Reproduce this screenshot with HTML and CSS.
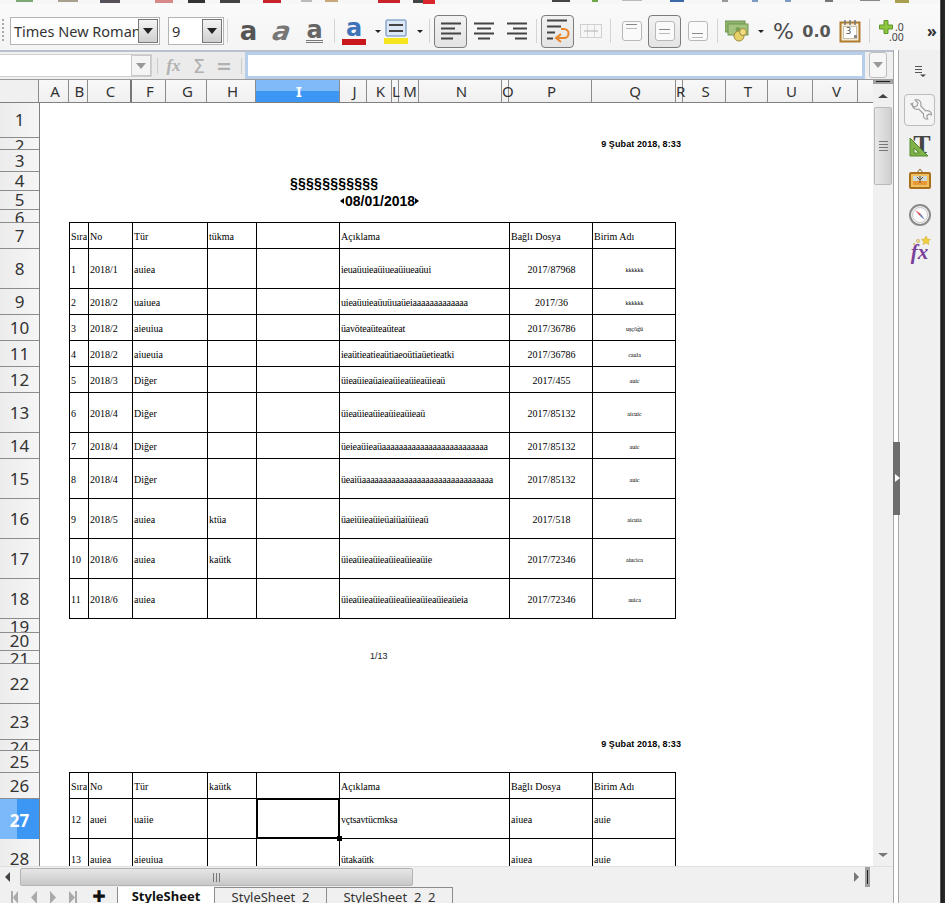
FILE: index.html
```html
<!DOCTYPE html>
<html lang="en">
<head>
  <meta charset="UTF-8" />
  <title>StyleSheet - Calc</title>
  <link rel="stylesheet" href="styles.css">
</head>
<body>
  <div class="window">
    <!-- what is left of the standard toolbar, cut off by the screenshot -->
    <svg class="top-strip" width="940" height="4" viewBox="0 0 940 4">
      <rect x="16" width="17" height="2" fill="#7fa876"/>
      <rect x="58" width="20" height="2" fill="#a8a08c"/>
      <rect x="100" width="20" height="3" fill="#55505a"/>
      <rect x="155" width="18" height="3" fill="#d88a8a"/>
      <rect x="188" width="17" height="3" fill="#333"/>
      <rect x="220" width="20" height="3" fill="#444"/>
      <rect x="263" width="18" height="3" fill="#c8222a"/>
      <rect x="301" width="11" height="2" fill="#bbb"/>
      <rect x="325" width="13" height="2" fill="#c8a878"/>
      <rect x="378" width="22" height="3" fill="#c8222a"/>
      <rect x="413" width="14" height="3" fill="#444"/>
      <rect x="423" width="12" height="4" fill="#d8262a"/>
      <rect x="552" width="18" height="2" fill="#444"/>
      <rect x="592" width="6" height="2" fill="#6fa84a"/>
      <rect x="622" width="20" height="1" fill="#bbb"/>
      <rect x="670" width="14" height="2" fill="#3c6aa8"/>
      <rect x="722" width="6" height="2" fill="#999"/>
      <rect x="752" width="6" height="2" fill="#7a9cc0"/>
      <rect x="785" width="6" height="2" fill="#7a9cc0"/>
      <rect x="825" width="8" height="2" fill="#777"/>
      <rect x="860" width="20" height="1" fill="#888"/>
      <rect x="895" width="14" height="3" fill="#a8a050"/>
    </svg>

    <div class="toolbar">
      <div class="grip"></div>
      <div class="combo combo-font">
        <span class="combo-text">Times New Roman</span>
        <span class="combo-btn"><i class="caret"></i></span>
      </div>
      <div class="combo combo-size">
        <span class="combo-text">9</span>
        <span class="combo-btn"><i class="caret"></i></span>
      </div>
      <div class="sep"></div>
      <div class="btn"><span class="glyph glyph-bold">a</span></div>
      <div class="btn"><span class="glyph glyph-italic">a</span></div>
      <div class="btn"><span class="glyph glyph-under">a</span></div>
      <div class="sep"></div>
      <div class="btn-sm">
        <span class="glyph glyph-color">a</span>
        <span class="bar bar-red"></span>
      </div>
      <i class="arrow"></i>
      <div class="btn-sm">
        <svg width="22" height="18" viewBox="0 0 22 18">
          <rect x="1" y="1" width="20" height="16" rx="1" fill="#dbe7f5" stroke="#5a84b8"/>
          <path d="M4 6h14M4 12h14" stroke="#444" stroke-width="2"/>
        </svg>
        <span class="bar bar-yellow"></span>
      </div>
      <i class="arrow"></i>
      <div class="sep"></div>
      <div class="btn active">
        <svg width="22" height="20" viewBox="0 0 22 20"><path d="M1 2.500h20M1 7.500h14M1 12.500h20M1 17.500h12" stroke="#444" stroke-width="2"/></svg>
      </div>
      <div class="btn">
        <svg width="22" height="20" viewBox="0 0 22 20"><path d="M1 2.500h20M4 7.500h14M1 12.500h20M5 17.500h12" stroke="#444" stroke-width="2"/></svg>
      </div>
      <div class="btn">
        <svg width="22" height="20" viewBox="0 0 22 20"><path d="M1 2.500h20M7 7.500h14M1 12.500h20M9 17.500h12" stroke="#444" stroke-width="2"/></svg>
      </div>
      <div class="sep"></div>
      <div class="btn active">
        <svg width="24" height="26" viewBox="0 0 24 26">
          <path d="M1 2.500h20M1 8.500h14M1 14.500h8M1 20.500h6" stroke="#444" stroke-width="2"/>
          <path d="M15 11h3a4.500 4.500 0 0 1 0 9h-6" fill="none" stroke="#e8862a" stroke-width="2"/>
          <path d="M15 16l-5 4 5 4" fill="none" stroke="#e8862a" stroke-width="2"/>
        </svg>
      </div>
      <div class="btn">
        <svg width="22" height="14" viewBox="0 0 22 14">
          <rect x=".5" y=".5" width="21" height="13" fill="#f6f6f6" stroke="#d0d0d0"/>
          <path d="M7.500 1v12M14.500 1v12" stroke="#d8d8d8"/>
          <path d="M4 7h14" stroke="#b0b0b0"/>
        </svg>
      </div>
      <div class="sep"></div>
      <div class="btn"><span class="cell-ico"><i class="mark-top"></i></span></div>
      <div class="btn active"><span class="cell-ico"><i class="mark-mid"></i></span></div>
      <div class="btn"><span class="cell-ico"><i class="mark-bot"></i></span></div>
      <div class="sep"></div>
      <div class="btn-sm">
        <svg width="24" height="22" viewBox="0 0 24 22">
          <rect x="0" y="1" width="20" height="11" fill="#8fb36a" stroke="#6f9650"/>
          <rect x="3" y="4" width="20" height="11" fill="#a4c47e" stroke="#6f9650"/>
          <circle cx="13" cy="9.500" r="2.500" fill="#7aa058"/>
          <circle cx="14" cy="16" r="5" fill="#e8d068" stroke="#9a8a3a"/>
          <circle cx="18" cy="12" r="3.500" fill="#efdc80" stroke="#9a8a3a"/>
        </svg>
      </div>
      <i class="arrow"></i>
      <div class="btn"><span class="txt-percent">%</span></div>
      <div class="btn"><span class="txt-num">0.0</span></div>
      <div class="btn">
        <svg width="22" height="24" viewBox="0 0 22 24">
          <rect x="1.500" y="3.500" width="19" height="19" fill="#f4ecd8" stroke="#b07c2e" stroke-width="2"/>
          <rect x="4.500" y="7.500" width="13" height="12" fill="#fff" stroke="#c8c0a8"/>
          <path d="M6 1v5M11 1v5M16 1v5" stroke="#777" stroke-width="1.500"/>
          <rect x="15" y="16" width="3" height="3" fill="#888"/>
        </svg>
        <span class="cal-day">3</span>
      </div>
      <div class="sep"></div>
      <div class="btn add-dec">
        <svg class="add-plus" width="14" height="14" viewBox="0 0 14 14"><path d="M5 .5h4v4.500h4.500v4H9v4.500H5V9H.5V5H5z" fill="#8cc63e" stroke="#5f9428"/></svg>
        <span class="add-dec-txt"><span>.0</span><span>.00</span></span>
      </div>
      <span class="more">»</span>
    </div>

    <div class="work">
      <div class="calc">
        <div class="formula">
          <div class="namebox">
            <span class="combo-btn flat"><i class="caret grey"></i></span>
          </div>
          <div class="fx-group">
            <span class="fx-sep"></span>
            <span class="fx-btn fx-italic">fx</span>
            <span class="fx-btn fx-sigma">Σ</span>
            <span class="fx-btn fx-equal">=</span>
            <span class="fx-sep"></span>
          </div>
          <div class="formula-input"></div>
          <div class="formula-drop"><i class="caret grey"></i></div>
        </div>

        <div class="sheet-area">
          <div class="sheet-main">
            <div class="colheads">
              <div class="corner"></div>
              <div>A</div><div>B</div><div class="hidden-after">C</div><div>F</div><div>G</div><div>H</div>
              <div class="sel">I</div>
              <div>J</div><div>K</div><div class="narrow">L</div><div>M</div><div>N</div><div class="narrow">O</div><div>P</div><div>Q</div>
              <div class="narrow">R</div><div>S</div><div>T</div><div>U</div><div>V</div><div></div>
            </div>

            <div class="sheet-body">
              <div class="rowheads">
                <div>1</div><div class="tight">2</div><div>3</div><div>4</div><div>5</div><div class="tight">6</div>
                <div>7</div><div>8</div><div>9</div><div>10</div><div>11</div><div>12</div><div>13</div><div>14</div>
                <div>15</div><div>16</div><div>17</div><div>18</div><div class="tight">19</div><div class="tight">20</div>
                <div class="tight">21</div><div>22</div><div>23</div><div class="tight">24</div><div>25</div><div>26</div>
                <div class="sel">27</div><div>28</div>
              </div>

              <div class="page">
                <div class="stamp first">9 Şubat 2018, 8:33</div>
                <div class="doc-title">§§§§§§§§§§§</div>
                <div class="doc-date"><i class="tri-l"></i>08/01/2018<i class="tri-r"></i></div>

                <table class="report first-table">
                  <colgroup>
                    <col class="c1"><col class="c2"><col class="c3"><col class="c4"><col class="c5"><col class="c6"><col class="c7"><col class="c8">
                  </colgroup>
                  <tr class="r26"><td>Sıra</td><td>No</td><td>Tür</td><td>tükma</td><td></td><td>Açıklama</td><td>Bağlı Dosya</td><td>Birim Adı</td></tr>
                  <tr class="r40"><td>1</td><td>2018/1</td><td>auiea</td><td></td><td></td><td class="desc">ieuaüuieaüiueaüiueaüui</td><td class="file">2017/87968</td><td class="unit">kkkkkk</td></tr>
                  <tr class="r26"><td>2</td><td>2018/2</td><td>uaiuea</td><td></td><td></td><td class="desc">uieaüuieaüuüuaüeiaaaaaaaaaaaaa</td><td class="file">2017/36</td><td class="unit">kkkkkk</td></tr>
                  <tr class="r26"><td>3</td><td>2018/2</td><td>aieuiua</td><td></td><td></td><td class="desc">üavöteaüteaüteat</td><td class="file">2017/36786</td><td class="unit">uşçöğü</td></tr>
                  <tr class="r26"><td>4</td><td>2018/2</td><td>aiueuia</td><td></td><td></td><td class="desc">ieaütieatieaütiaeoütiaüetieatki</td><td class="file">2017/36786</td><td class="unit">caula</td></tr>
                  <tr class="r26"><td>5</td><td>2018/3</td><td>Diğer</td><td></td><td></td><td class="desc">üieaüieaüaieaüieaüieaüieaü</td><td class="file">2017/455</td><td class="unit">auic</td></tr>
                  <tr class="r40"><td>6</td><td>2018/4</td><td>Diğer</td><td></td><td></td><td class="desc">üieaüieaüieaüieaüieaü</td><td class="file">2017/85132</td><td class="unit">aicuic</td></tr>
                  <tr class="r26"><td>7</td><td>2018/4</td><td>Diğer</td><td></td><td></td><td class="desc">üeieaüieaüaaaaaaaaaaaaaaaaaaaaaaaaa</td><td class="file">2017/85132</td><td class="unit">auic</td></tr>
                  <tr class="r40"><td>8</td><td>2018/4</td><td>Diğer</td><td></td><td></td><td class="desc">üeaiüaaaaaaaaaaaaaaaaaaaaaaaaaaaaaaa</td><td class="file">2017/85132</td><td class="unit">auic</td></tr>
                  <tr class="r40"><td>9</td><td>2018/5</td><td>auiea</td><td>ktüa</td><td></td><td class="desc">üaeiüieaüieüaiüaiüieaü</td><td class="file">2017/518</td><td class="unit">aicuia</td></tr>
                  <tr class="r40"><td>10</td><td>2018/6</td><td>auiea</td><td>kaütk</td><td></td><td class="desc">üieaüieaüieaüieaüieaüie</td><td class="file">2017/72346</td><td class="unit">aiucica</td></tr>
                  <tr class="r40"><td>11</td><td>2018/6</td><td>auiea</td><td></td><td></td><td class="desc">üieaüieaüieaüieaüieaüieaüieaüeia</td><td class="file">2017/72346</td><td class="unit">auica</td></tr>
                </table>

                <div class="page-no">1/13</div>
                <div class="stamp second">9 Şubat 2018, 8:33</div>

                <table class="report second-table">
                  <colgroup>
                    <col class="c1"><col class="c2"><col class="c3"><col class="c4"><col class="c5"><col class="c6"><col class="c7"><col class="c8">
                  </colgroup>
                  <tr class="r26"><td>Sıra</td><td>No</td><td>Tür</td><td>kaütk</td><td></td><td>Açıklama</td><td>Bağlı Dosya</td><td>Birim Adı</td></tr>
                  <tr class="r40"><td>12</td><td>auei</td><td>uaiie</td><td></td><td class="current"><span class="cursor"></span><span class="cursor-dot"></span></td><td class="desc">vçtsavtücmksa</td><td>aiuea</td><td>auie</td></tr>
                  <tr class="r40"><td>13</td><td>auiea</td><td>aieuiua</td><td></td><td></td><td class="desc">ütakaütk</td><td>aiuea</td><td>auie</td></tr>
                </table>
              </div>
            </div>
          </div>

          <div class="vscroll">
            <div class="split-h"></div>
            <i class="tri-up"></i>
            <div class="vthumb"><span></span><span></span><span></span><span></span></div>
            <i class="tri-down"></i>
          </div>
        </div>

        <div class="hscroll">
          <i class="tri-left"></i>
          <div class="hthumb"><span></span><span></span><span></span></div>
          <i class="tri-right"></i>
          <div class="split-v"></div>
        </div>

        <div class="tabbar">
          <div class="tab-nav">
            <svg width="90" height="16" viewBox="0 0 90 16">
              <path d="M11 3h2v13h-2zM18 3l-5 6.500 5 6.500z" fill="#aaa"/>
              <path d="M37 3l-6 6.500 6 6.500z" fill="#aaa"/>
              <path d="M50 3l6 6.500-6 6.500z" fill="#aaa"/>
              <path d="M69 3l6 6.500-6 6.500zM75 3h2v13h-2z" fill="#aaa"/>
            </svg>
          </div>
          <span class="tab-add">✚</span>
          <div class="tab tab-on">StyleSheet</div>
          <div class="tab tab-2">StyleSheet&nbsp; 2</div>
          <div class="tab tab-3">StyleSheet&nbsp; 2&nbsp; 2</div>
        </div>
      </div>

      <div class="deck-split">
        <div class="deck-handle"></div>
      </div>

      <div class="sidebar">
        <svg class="deck-menu" width="12" height="12" viewBox="0 0 12 12"><path d="M1 1.500h7M1 4.500h7M1 7.500h7" stroke="#555"/><path d="M6 9.500h6l-3 2.500z" fill="#444"/></svg>
        <div class="deck-btn on">
          <svg width="24" height="24" viewBox="0 0 24 24"><path d="M3 6l3 3 3-1 1-3-3-3c3-1 6 1 6 4 0 1 0 1.500-.3 2l5 5c3-1 6 1 6 4l-3-1-2 2 1 3c-3 .5-5-2-4-5l-5-5c-.5.300-1 .3-2 .3-3 0-5-3-4-6z" fill="#f8f8f8" stroke="#a0a0a0" stroke-width="1.200"/></svg>
        </div>
        <div class="deck-btn">
          <span class="deck-t">T</span>
          <svg class="deck-tri" width="20" height="20" viewBox="0 0 20 20"><path d="M1 1v18h18z" fill="#7fb04a" stroke="#4f8a2a"/><path d="M5 11v5h5z" fill="#e8f2d8" stroke="#4f8a2a"/></svg>
        </div>
        <div class="deck-btn">
          <svg width="24" height="24" viewBox="0 0 24 24">
            <path d="M12 1l-3 4h6z" fill="none" stroke="#8a6a2a"/>
            <rect x="2" y="5" width="20" height="15" rx="1" fill="#f0c060" stroke="#a8701c" stroke-width="2"/>
            <rect x="5" y="8" width="14" height="5" fill="#cfd8d8"/>
            <rect x="5" y="13" width="14" height="4" fill="#e89838"/>
            <path d="M12 8v7M9 9l3 3 3-3" stroke="#6a4a20" fill="none"/>
          </svg>
        </div>
        <div class="deck-btn">
          <svg width="24" height="24" viewBox="0 0 24 24">
            <circle cx="12" cy="12" r="10" fill="#f4f4f4" stroke="#8a8a8a" stroke-width="2"/>
            <circle cx="12" cy="12" r="7.500" fill="#fbfbfb" stroke="#c8c8c8"/>
            <path d="M7 7l6 4-1 2z" fill="#d84a4a"/>
            <path d="M17 17l-5-4 1-2z" fill="#5a7ab8"/>
          </svg>
        </div>
        <div class="deck-btn deck-fx">
          <span class="deck-fx-txt">fx</span>
          <svg class="deck-stars" width="20" height="10" viewBox="0 0 20 10"><path d="M14 0l1.500 3 3 .5-2.200 2 .6 3-2.900-1.500-2.900 1.500.6-3-2.200-2 3-.5z" fill="#f0d040" stroke="#c8a820" stroke-width=".5"/><circle cx="6" cy="5" r="1.800" fill="#e8d898" stroke="#b8a050" stroke-width=".5"/><circle cx="2" cy="8" r="1" fill="#c8b060"/></svg>
        </div>
      </div>
    </div>
  </div>
  <div class="edge"></div>
</body>
</html>
```

FILE: styles.css
```css
html, body {
  margin: 0;
  padding: 0;
  height: 903px;
  overflow: hidden;
}
body {
  display: flex;
  font-family: 'Noto Sans', sans-serif;
  color: #333;
  background: #f0f0f0;
}
.window {
  width: 940px;
  height: 903px;
  display: flex;
  flex-direction: column;
  flex: none;
}
.edge {
  width: 5px;
  background: linear-gradient(to right, #777, #1e1e1e 30%, #2a2a2a);
}
.top-strip {
  display: block;
  flex: none;
  background: #f7f7f7;
}

/* Formatting toolbar */
.toolbar {
  height: 46px;
  box-sizing: border-box;
  padding: 8px 0 0 2px;
  display: flex;
  align-items: center;
  flex: none;
  background: linear-gradient(to bottom, #fafafa, #f4f4f4);
}
.grip {
  width: 2px;
  height: 24px;
  background: repeating-linear-gradient(to bottom, #aaa 0 2px, transparent 2px 4px);
}
.combo {
  height: 28px;
  box-sizing: border-box;
  border: 1px solid #b4b4b4;
  background: #fff;
  display: flex;
  align-items: center;
  margin-left: 6px;
  flex: none;
  position: relative;
}
.combo-font {
  width: 150px;
}
.combo-size {
  width: 56px;
  margin-left: 8px;
}
.combo-text {
  font-size: 14.5px;
  padding-left: 3px;
  white-space: nowrap;
  color: #333;
  overflow: hidden;
  flex: 1;
}
.combo-btn {
  width: 20px;
  height: 24px;
  margin-right: 1px;
  box-sizing: border-box;
  border: 1px solid #777;
  background: linear-gradient(to bottom, #f4f4f4, #cfcfcf);
  display: flex;
  align-items: center;
  justify-content: center;
  flex: none;
}
.caret {
  display: block;
  width: 0;
  height: 0;
  border-left: 5px solid transparent;
  border-right: 5px solid transparent;
  border-top: 6px solid #222;
}
.caret.grey {
  border-top-color: #999;
}
.sep {
  width: 1px;
  height: 24px;
  margin: 0 4px 0 3px;
  background: #d4d4d4;
  flex: none;
}
.btn {
  width: 33px;
  height: 33px;
  box-sizing: border-box;
  display: flex;
  align-items: center;
  justify-content: center;
  flex: none;
  position: relative;
}
.btn.active {
  border: 1px solid #7c7c7c;
  border-radius: 4px;
  background: linear-gradient(to bottom, #f2f2f2, #e4e4e4);
}
.btn-sm {
  width: 24px;
  height: 33px;
  margin-left: 3px;
  display: flex;
  flex-direction: column;
  align-items: center;
  justify-content: center;
  flex: none;
}
.arrow {
  width: 0;
  height: 0;
  margin-left: 9px;
  margin-right: 3px;
  border-left: 3px solid transparent;
  border-right: 3px solid transparent;
  border-top: 3px solid #222;
  flex: none;
}
.arrow + .btn-sm {
  margin-left: 0;
}
.glyph {
  font-family: 'DejaVu Sans', sans-serif;
  font-size: 26px;
  line-height: 24px;
  color: #555;
}
.glyph-bold {
  font-weight: 700;
}
.glyph-italic {
  display: inline-block;
  font-style: italic;
  font-weight: 700;
  color: #777;
  transform: skewX(-10deg);
}
.glyph-under {
  color: #666;
  border-bottom: 3px double #777;
  line-height: 20px;
  font-size: 24px;
  font-weight: 700;
}
.glyph-color {
  color: #3f74b8;
  font-weight: 700;
  font-size: 24px;
  line-height: 22px;
}
.bar {
  width: 24px;
  height: 6px;
  flex: none;
}
.bar-red {
  background: #c8181e;
}
.bar-yellow {
  background: #f6e41e;
  margin-top: 1px;
}
.cell-ico {
  width: 20px;
  height: 20px;
  box-sizing: border-box;
  border: 1px solid #b8b8b8;
  border-radius: 3px;
  background: #fafafa;
  display: flex;
  padding: 2px 3px;
}
.cell-ico i {
  display: block;
  width: 11px;
  height: 3px;
  border-top: 1px solid #888;
  border-bottom: 1px solid #bbb;
}
.mark-mid {
  align-self: center;
}
.mark-bot {
  align-self: flex-end;
}
.txt-percent {
  font-family: 'DejaVu Sans', sans-serif;
  font-size: 22px;
  color: #4a4a4a;
}
.txt-num {
  font-family: 'DejaVu Sans', sans-serif;
  font-weight: 700;
  font-size: 16px;
  color: #555;
}
.cal-day {
  position: absolute;
  left: 13px;
  top: 11px;
  font-size: 9px;
  line-height: 10px;
  color: #444;
}
.add-dec {
  justify-content: flex-start;
  align-items: flex-start;
  padding: 5px 0 0 5px;
}
.add-plus {
  flex: none;
}
.add-dec-txt {
  display: flex;
  flex-direction: column;
  align-items: flex-end;
  margin-left: -4px;
  padding-top: 2px;
  font-size: 10.5px;
  line-height: 10px;
  color: #444;
}
.more {
  margin-left: 20px;
  font-size: 16px;
  font-weight: 700;
  color: #333;
  line-height: 15px;
}

/* Below the toolbar */
.work {
  flex: 1;
  display: flex;
  min-height: 0;
}
.calc {
  width: 893px;
  display: flex;
  flex-direction: column;
  flex: none;
  min-width: 0;
}

/* Formula bar */
.formula {
  height: 29px;
  box-sizing: border-box;
  border-top: 2px solid #b9c2cc;
  display: flex;
  align-items: stretch;
  flex: none;
  background: #f0f0f0;
}
.namebox {
  width: 152px;
  margin: 2px 0;
  background: #fff;
  border: 1px solid #cfcfcf;
  border-left: 0;
  box-sizing: border-box;
  display: flex;
  justify-content: flex-end;
  flex: none;
}
.combo-btn.flat {
  border: 1px solid #c8c8c8;
  background: #f4f4f4;
  height: auto;
  margin: 0;
}
.fx-group {
  width: 93px;
  background: #ebebeb;
  display: flex;
  align-items: center;
  flex: none;
  box-sizing: border-box;
  padding-left: 5px;
}
.fx-sep {
  width: 1px;
  height: 16px;
  background: #ccc;
  flex: none;
}
.fx-btn {
  text-align: center;
  color: #b0b0b0;
  font-family: 'DejaVu Sans', sans-serif;
  flex: none;
}
.fx-italic {
  width: 31px;
  font-family: 'Liberation Serif', serif;
  font-style: italic;
  font-weight: 700;
  font-size: 17px;
}
.fx-sigma {
  width: 20px;
  font-size: 19px;
}
.fx-equal {
  width: 30px;
  font-size: 19px;
  font-weight: 700;
  margin-right: 2px;
}
.formula-input {
  flex: 1;
  box-sizing: border-box;
  background: #fff;
  border: 3px solid #b6cee9;
}
.formula-drop {
  width: 18px;
  margin: 0 6px 1px 4px;
  box-sizing: border-box;
  border: 1px solid #bdbdbd;
  border-radius: 3px;
  background: #f6f6f6;
  display: flex;
  align-items: center;
  justify-content: center;
  flex: none;
}

/* Sheet */
.sheet-area {
  flex: 1;
  min-height: 0;
  display: flex;
}
.sheet-main {
  width: 873px;
  display: flex;
  flex-direction: column;
  flex: none;
}
.colheads {
  height: 24px;
  box-sizing: border-box;
  border-top: 1px solid #9c9c9c;
  border-bottom: 1px solid #808080;
  display: grid;
  grid-template-columns: 39px 30px 19px 44px 34px 41px 49px 84px 27px 25px 7px 20px 83px 7px 83px 84px 7px 43px 42px 45px 45px 15px;
  background: linear-gradient(to bottom, #f8f8f8, #f0f0f0);
  flex: none;
}
.colheads div {
  border-right: 1px solid #8c8c8c;
  box-sizing: border-box;
  padding-left: 3px;
  font-size: 15px;
  line-height: 22px;
  text-align: center;
  white-space: nowrap;
}
.colheads div:last-child {
  border-right: 0;
}
.colheads .narrow {
  padding-left: 0;
}
.colheads .hidden-after {
  border-right: 2px solid #777;
}
.colheads .corner {
  background: #f0f0f0;
}
.colheads .sel {
  background: linear-gradient(to bottom, #80baf8 0 50%, #3b96f4 50%);
  color: #fff;
  font-weight: 700;
}
.sheet-body {
  flex: 1;
  min-height: 0;
  display: flex;
  overflow: hidden;
}
.rowheads {
  width: 39px;
  flex: none;
  display: grid;
  grid-template-rows: 35px 12px 22px 19px 19px 13px 26px 40px 26px 26px 26px 26px 40px 26px 40px 40px 40px 40px 14px 18px 13px 40px 36px 11px 22px 26px 40px 40px;
  border-right: 1px solid #808080;
  background: linear-gradient(to right, #ececec, #f6f6f6);
}
.rowheads div {
  border-bottom: 1px solid #8c8c8c;
  box-sizing: border-box;
  display: flex;
  align-items: center;
  justify-content: center;
  overflow: hidden;
  font-size: 17px;
  line-height: 18px;
}
.rowheads .tight {
  align-items: flex-start;
  line-height: 15px;
}
.rowheads .sel {
  padding-top: 3px;
  background: linear-gradient(to right, #7cb9fa 0 44%, #3b96f4 44%);
  color: #fff;
  font-weight: 700;
  border-bottom: 0;
}
.page {
  flex: 1;
  background: #fff;
  padding-left: 29px;
  min-width: 0;
  font-family: 'Liberation Serif', serif;
  color: #000;
}
.stamp {
  width: 612px;
  text-align: right;
  font-family: 'Liberation Sans', sans-serif;
  font-weight: 700;
  font-size: 9px;
  letter-spacing: .1px;
  line-height: 14px;
}
.stamp.first {
  margin-top: 34px;
}
.stamp.second {
  margin-top: 75px;
}
.doc-title,
.doc-date {
  font-family: 'Liberation Sans', sans-serif;
  font-weight: 700;
  font-size: 14px;
  line-height: 16px;
}
.doc-title {
  margin: 24px 0 0 221px;
  letter-spacing: .25px;
}
.doc-date {
  margin: 2px 0 0 271px;
  display: flex;
  align-items: center;
}
.tri-l,
.tri-r {
  width: 0;
  height: 0;
  border-top: 3px solid transparent;
  border-bottom: 3px solid transparent;
  flex: none;
}
.tri-l {
  border-right: 4px solid #000;
  margin-right: 1px;
}
.tri-r {
  border-left: 4px solid #000;
}
.report {
  border-collapse: collapse;
  table-layout: fixed;
  width: 606px;
  font-size: 10px;
  line-height: 12px;
}
.first-table {
  margin-top: 13px;
}
.second-table {
  margin-top: 21px;
}
.report td {
  border: 1px solid #000;
  padding: 2px 0 0 1px;
  white-space: nowrap;
  overflow: hidden;
}
.c1 { width: 19px; }
.c2 { width: 44px; }
.c3 { width: 75px; }
.c4 { width: 49px; }
.c5 { width: 83px; }
.c6 { width: 170px; }
.c7 { width: 83px; }
.c8 { width: 83px; }
.r26 { height: 26px; }
.r40 { height: 40px; }
.report .desc {
  letter-spacing: -.2px;
}
.report .file {
  text-align: center;
}
.report .unit {
  text-align: center;
  font-size: 6px;
}
.report .current {
  position: relative;
  overflow: visible;
}
.cursor {
  position: absolute;
  left: -1px;
  top: -1px;
  right: -1px;
  bottom: -1px;
  border: 2px solid #000;
}
.cursor-dot {
  position: absolute;
  right: -3px;
  bottom: -3px;
  width: 5px;
  height: 5px;
  background: #000;
}
.page-no {
  margin: 31px 0 0 301px;
  font-family: 'Liberation Sans', sans-serif;
  font-size: 9px;
  line-height: 12px;
  color: #222;
}

/* Vertical scrollbar */
.vscroll {
  width: 20px;
  flex: none;
  display: flex;
  flex-direction: column;
  align-items: center;
  background: #f0f0f0;
}
.split-h {
  width: 20px;
  height: 5px;
  background: #a0a0a0;
  flex: none;
}
.split-h::after {
  content: "";
  display: block;
  height: 1px;
  margin: 2px 3px 0;
  background: #222;
}
.tri-up,
.tri-down {
  width: 0;
  height: 0;
  border-left: 5px solid transparent;
  border-right: 5px solid transparent;
  flex: none;
}
.tri-up {
  margin-top: 10px;
  border-bottom: 4px solid #444;
}
.tri-down {
  margin-top: 668px;
  border-top: 4px solid #777;
}
.vthumb {
  width: 18px;
  height: 78px;
  margin-top: 9px;
  box-sizing: border-box;
  border: 1px solid #b8b8b8;
  border-radius: 2px;
  background: linear-gradient(to right, #e8e8e8, #cfcfcf);
  display: flex;
  flex-direction: column;
  align-items: center;
  justify-content: center;
  gap: 2px;
  flex: none;
}
.vthumb span {
  width: 9px;
  height: 1px;
  background: #777;
}

/* Horizontal scrollbar */
.hscroll {
  height: 21px;
  display: flex;
  align-items: center;
  flex: none;
  background: #f0f0f0;
  box-sizing: border-box;
  border-top: 1px solid #e0e0e0;
}
.tri-left,
.tri-right {
  width: 0;
  height: 0;
  border-top: 5px solid transparent;
  border-bottom: 5px solid transparent;
  flex: none;
}
.tri-left {
  margin-left: 5px;
  border-right: 5px solid #444;
}
.tri-right {
  margin-left: 441px;
  border-left: 5px solid #777;
}
.hthumb {
  width: 393px;
  height: 18px;
  margin-left: 10px;
  box-sizing: border-box;
  border: 1px solid #b4b4b4;
  border-radius: 2px;
  background: linear-gradient(to bottom, #e6e6e6, #c8c8c8);
  display: flex;
  align-items: center;
  justify-content: center;
  gap: 2px;
  flex: none;
}
.hthumb span {
  width: 1px;
  height: 9px;
  background: #777;
}
.split-v {
  width: 5px;
  height: 20px;
  margin-left: 6px;
  background: #a0a0a0;
  flex: none;
}
.split-v::after {
  content: "";
  display: block;
  width: 1px;
  height: 14px;
  margin: 3px 0 0 2px;
  background: #222;
}

/* Sheet tabs */
.tabbar {
  height: 16px;
  display: flex;
  align-items: flex-start;
  flex: none;
  overflow: hidden;
  background: #f0f0f0;
}
.tab-nav {
  width: 90px;
  height: 16px;
  flex: none;
}
.tab-add {
  width: 27px;
  box-sizing: border-box;
  padding-right: 9px;
  text-align: center;
  font-family: 'DejaVu Sans', sans-serif;
  font-size: 16px;
  line-height: 20px;
  color: #111;
  flex: none;
}
.tab {
  height: 16px;
  box-sizing: border-box;
  border: 1px solid #8c8c8c;
  border-bottom: 0;
  border-left: 0;
  font-size: 13px;
  line-height: 19px;
  text-align: center;
  white-space: nowrap;
  color: #333;
  flex: none;
}
.tab-on {
  width: 98px;
  background: #fff;
  border-left: 1px solid #8c8c8c;
  border-top: 0;
  font-weight: 700;
  color: #111;
}
.tab-2 {
  width: 112px;
}
.tab-3 {
  width: 126px;
}

/* Sidebar */
.deck-split {
  width: 6px;
  flex: none;
  box-sizing: border-box;
  border-left: 1px solid #a8a8a8;
  border-right: 1px solid #a8a8a8;
  background: #fff;
  display: flex;
  flex-direction: column;
}
.deck-handle {
  width: 7px;
  height: 73px;
  margin: 392px 0 0 -1px;
  background: #6e6e6e;
  position: relative;
  flex: none;
}
.deck-handle::after {
  content: "";
  position: absolute;
  left: 2px;
  top: 32px;
  border-top: 4px solid transparent;
  border-bottom: 4px solid transparent;
  border-left: 5px solid #fff;
}
.sidebar {
  flex: 1;
  background: #f0f0f0;
  display: flex;
  flex-direction: column;
  align-items: center;
  padding-top: 15px;
}
.deck-menu {
  flex: none;
  margin-bottom: 17px;
}
.deck-btn {
  width: 31px;
  height: 32px;
  margin-bottom: 3px;
  box-sizing: border-box;
  display: flex;
  align-items: center;
  justify-content: center;
  position: relative;
  flex: none;
}
.deck-btn.on {
  border: 1px solid #bcbcbc;
  border-radius: 4px;
  background: #f4f4f4;
}
.deck-t {
  font-family: 'Liberation Serif', serif;
  font-weight: 700;
  font-size: 26px;
  line-height: 26px;
  color: #444;
  margin-left: 5px;
}
.deck-tri {
  position: absolute;
  left: 5px;
  top: 8px;
}
.deck-fx-txt {
  font-family: 'Liberation Serif', serif;
  font-style: italic;
  font-weight: 700;
  font-size: 21px;
  line-height: 20px;
  color: #7a3f9a;
  margin-top: 3px;
}
.deck-stars {
  position: absolute;
  left: 8px;
  top: 2px;
}
```
